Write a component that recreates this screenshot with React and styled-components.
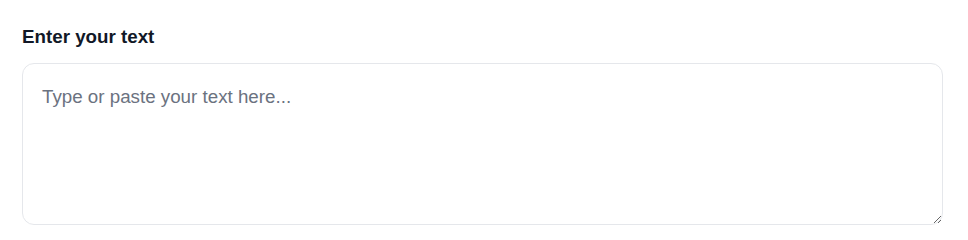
import React from 'react';
import styled, {createGlobalStyle} from 'styled-components';

const GlobalStyle = createGlobalStyle`
    body {
        margin: 0;
        background: #ffffff;
        font-family: "Liberation Sans", Arial, sans-serif;
    }
`;

const Wrapper = styled.div`
    display: flex;
    flex-direction: column;
    padding: 25px 25px 0 22px;
`;

const Label = styled.label`
    font-size: 18.75px;
    font-weight: 700;
    line-height: 24px;
    color: #111827;
    margin-bottom: 14px;
`;

const TextArea = styled.textarea`
    box-sizing: border-box;
    width: 100%;
    height: 162px;
    padding: 19px 19px;
    border: 1px solid #e5e7eb;
    border-radius: 12px;
    font-family: "Liberation Sans", Arial, sans-serif;
    font-size: 18.75px;
    line-height: 28px;
    color: #111827;
    resize: vertical;
    outline: none;
    &::placeholder {
        color: #6b7280;
    }
`;

function App(){
    return (
        <Wrapper>
            <GlobalStyle />
            <Label htmlFor="text-input">Enter your text</Label>
            <TextArea id="text-input" placeholder="Type or paste your text here..." />
        </Wrapper>
    );
}
export default App;
